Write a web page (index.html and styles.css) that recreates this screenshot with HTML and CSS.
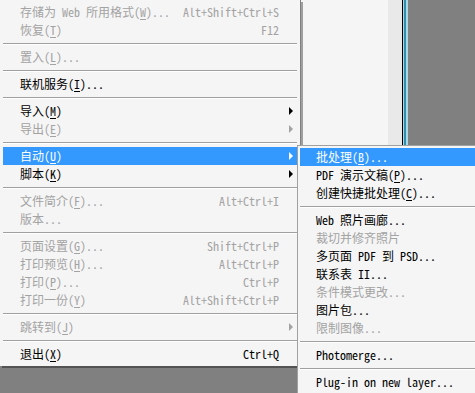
FILE: index.html
```html
<!DOCTYPE html>
<html>
<head>
<meta charset="utf-8">
<link rel="stylesheet" href="styles.css">
</head>
<body>
<div class="desk">
  <div class="backwin"><div class="bw-body"></div><div class="bw-scroll"></div><div class="bw-edge"></div></div>

  <div class="menu main">
    <div class="item dis"><span class="lbl">存储为 Web 所用格式(<u>W</u>)...</span><span class="key">Alt+Shift+Ctrl+S</span></div>
    <div class="item dis"><span class="lbl">恢复(<u>T</u>)</span><span class="key">F12</span></div>
    <div class="sep"></div>
    <div class="item dis"><span class="lbl">置入(<u>L</u>)...</span></div>
    <div class="sep"></div>
    <div class="item"><span class="lbl">联机服务(<u>I</u>)...</span></div>
    <div class="sep"></div>
    <div class="item sub"><span class="lbl">导入(<u>M</u>)</span><span class="arrow"></span></div>
    <div class="item sub dis"><span class="lbl">导出(<u>E</u>)</span><span class="arrow"></span></div>
    <div class="sep"></div>
    <div class="item sub hl"><span class="lbl">自动(<u>U</u>)</span><span class="arrow"></span></div>
    <div class="item sub"><span class="lbl">脚本(<u>K</u>)</span><span class="arrow"></span></div>
    <div class="sep"></div>
    <div class="item dis"><span class="lbl">文件简介(<u>F</u>)...</span><span class="key">Alt+Ctrl+I</span></div>
    <div class="item dis"><span class="lbl">版本...</span></div>
    <div class="sep"></div>
    <div class="item dis"><span class="lbl">页面设置(<u>G</u>)...</span><span class="key">Shift+Ctrl+P</span></div>
    <div class="item dis"><span class="lbl">打印预览(<u>H</u>)...</span><span class="key">Alt+Ctrl+P</span></div>
    <div class="item dis"><span class="lbl">打印(<u>P</u>)...</span><span class="key">Ctrl+P</span></div>
    <div class="item dis"><span class="lbl">打印一份(<u>Y</u>)</span><span class="key">Alt+Shift+Ctrl+P</span></div>
    <div class="sep"></div>
    <div class="item sub dis"><span class="lbl">跳转到(<u>J</u>)</span><span class="arrow"></span></div>
    <div class="sep"></div>
    <div class="item"><span class="lbl">退出(<u>X</u>)</span><span class="key">Ctrl+Q</span></div>
  </div>

  <div class="menu submenu">
    <div class="item hl"><span class="lbl">批处理(<u>B</u>)...</span></div>
    <div class="item"><span class="lbl">PDF 演示文稿(<u>P</u>)...</span></div>
    <div class="item"><span class="lbl">创建快捷批处理(<u>C</u>)...</span></div>
    <div class="sep"></div>
    <div class="item"><span class="lbl">Web 照片画廊...</span></div>
    <div class="item dis"><span class="lbl">裁切并修齐照片</span></div>
    <div class="item"><span class="lbl">多页面 PDF 到 PSD...</span></div>
    <div class="item"><span class="lbl">联系表 II...</span></div>
    <div class="item dis"><span class="lbl">条件模式更改...</span></div>
    <div class="item"><span class="lbl">图片包...</span></div>
    <div class="item dis"><span class="lbl">限制图像...</span></div>
    <div class="sep"></div>
    <div class="item"><span class="lbl">Photomerge...</span></div>
    <div class="sep"></div>
    <div class="item"><span class="lbl">Plug-in on new layer...</span></div>
  </div>
</div>
</body>
</html>
```

FILE: styles.css
```css
html, body {
  margin: 0;
  padding: 0;
}
body {
  width: 475px;
  height: 393px;
  overflow: hidden;
  background: #808080;
  font-family: "Noto Sans Mono CJK SC", "Liberation Mono", "Noto Sans CJK SC", monospace;
  font-size: 12px;
  color: #000;
}
.desk {
  position: relative;
  width: 475px;
  height: 393px;
  overflow: hidden;
}
.backwin {
  position: absolute;
  left: 300px;
  top: 0;
  height: 393px;
  display: flex;
}
.bw-body {
  width: 88px;
  background: #f5f5f5;
}
.bw-scroll {
  width: 14px;
  background: #e9e9e9;
}
.bw-edge {
  width: 5px;
  border-left: 1px solid #000;
  background: linear-gradient(90deg, #a8d8ea 0, #a8d8ea 1px, #2f8fa8 1px, #2f8fa8 3px, #a8d8ea 3px);
}
.menu {
  position: absolute;
  background: #f5f5f5;
  box-sizing: border-box;
}
.main {
  left: 0;
  top: 0;
  width: 301px;
  padding: 3px 3px 3px 3px;
  border-right: 1px solid #808080;
  box-shadow: 2px 2px 0 rgba(0,0,0,0.35);
}
.submenu {
  left: 297px;
  top: 145px;
  width: 200px;
  padding: 2px 0 2px 2px;
  border: 1px solid #a0a0a0;
  border-right: 0;
}
.item {
  height: 18px;
  display: flex;
  align-items: center;
  line-height: 18px;
  white-space: pre;
  position: relative;
}
.main .item {
  padding: 0 0 0 17px;
}
.submenu .item {
  padding: 0 0 0 16px;
}
.lbl {
  flex: 1;
}
.key {
  padding-right: 18px;
}
.dis {
  color: #a3a3a3;
}
.hl {
  background: #3399ff;
  color: #fff;
}
u {
  text-decoration: underline;
  text-underline-offset: 2px;
}
.arrow {
  width: 0;
  height: 0;
  border-left: 4px solid #000;
  border-top: 4px solid transparent;
  border-bottom: 4px solid transparent;
  margin-right: 4px;
}
.dis .arrow {
  border-left-color: #a3a3a3;
}
.hl .arrow {
  border-left-color: #fff;
}
.sep {
  height: 9px;
  display: flex;
  flex-direction: column;
  justify-content: center;
}
.sep::before {
  content: "";
  display: block;
  height: 1px;
  background: #a0a0a0;
  border-bottom: 1px solid #fff;
}
```
